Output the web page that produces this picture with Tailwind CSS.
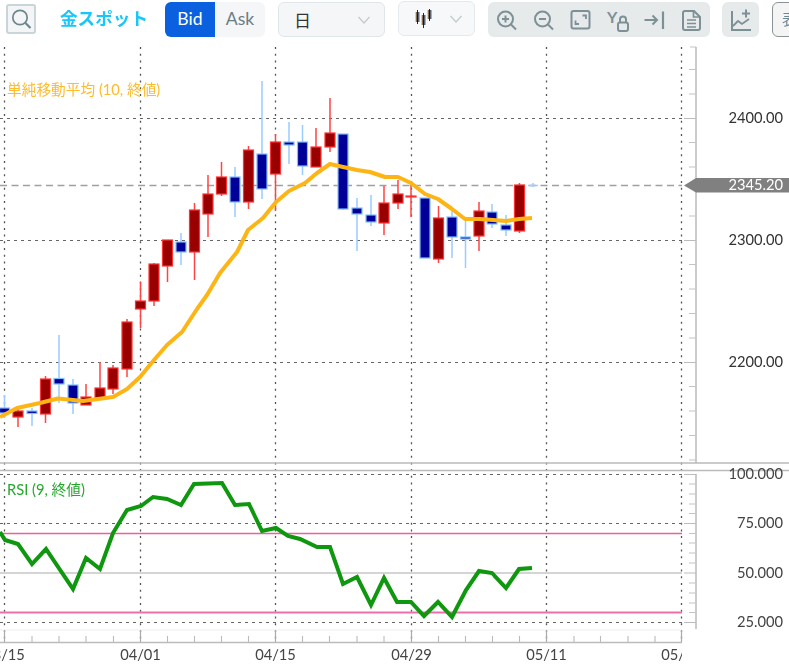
<!DOCTYPE html>
<html lang="ja">
<head>
<meta charset="utf-8">
<script src="https://cdn.jsdelivr.net/npm/@tailwindcss/browser@4"></script>
<title>金スポット</title>
</head>
<body class="bg-white overflow-hidden font-['Lato','Noto_Sans_CJK_JP',sans-serif]">
<div class="w-[789px] h-[664px] overflow-hidden flex flex-col blur-[0.35px]">
  <header class="h-[40px] shrink-0 flex items-start pt-[2px] overflow-hidden">
    <button class="ml-[6px] mt-[2px] w-[30px] h-[30px] rounded-[3px] border-2 border-[#c9d5d8] bg-[#f3f5f6] flex items-center justify-center shrink-0">
      <svg class="w-[24px] h-[24px]" viewBox="0 0 24 24" fill="none" stroke="#6f858d" stroke-width="1.7"><circle cx="11" cy="10.5" r="7.2"/><path d="M16.5 16l5 5" stroke-width="2.2"/></svg>
    </button>
    <div class="ml-[24px] w-[105px] shrink-0 h-[33px] flex items-center text-[17.6px] font-bold text-[#17c6fb] font-['Noto_Sans_CJK_JP',sans-serif]">金スポット</div>
    <div class="flex h-[35px] w-[100px] shrink-0 rounded-[6px] overflow-hidden text-[17.6px]">
      <div class="w-[50px] bg-[#0a60df] text-white flex items-center justify-center">Bid</div>
      <div class="w-[50px] bg-[#f5f6f7] text-[#6d7d86] flex items-center justify-center">Ask</div>
    </div>
    <div class="ml-[13px] w-[107px] h-[35px] shrink-0 rounded-[6px] border border-[#dfe6ea] bg-[#f5f6f7] flex items-center justify-between pl-[15px] pr-[13px] text-[17px] text-[#333] font-['Noto_Sans_CJK_JP',sans-serif]">
      <span>日</span>
      <svg class="w-[14px] h-[10px]" viewBox="0 0 14 10" fill="none" stroke="#c4ccd0" stroke-width="1.4"><path d="M1.5 2l5.500 6 5.500-6"/></svg>
    </div>
    <div class="ml-[13px] -mt-[1px] w-[77px] h-[35px] shrink-0 rounded-[6px] border border-[#e3e9ec] bg-[#f7f8f9] flex items-center pl-[15px]">
      <svg class="w-[20px] h-[20px]" viewBox="0 0 20 20" fill="none">
        <path d="M3.500 1v14M9.500 4v15M15.500 -1v13" stroke="#2a2226" stroke-width="1"/>
        <path d="M1.500 3h1v10h-1zM7.500 6h1v10h-1zM13.500 1h1v9h-1z" fill="#f39a1f"/>
        <path d="M4.500 3h1v10h-1zM10.500 6h1v10h-1zM16.500 1h1v9h-1z" fill="#2f6fc0"/>
        <path d="M2.500 3h2v10h-2zM8.500 6h2v10h-2zM14.500 1h2v9h-2z" fill="#1a1518"/>
      </svg>
      <svg class="ml-[15px] w-[14px] h-[10px]" viewBox="0 0 14 10" fill="none" stroke="#c4ccd0" stroke-width="1.4"><path d="M1.500 2l5.500 6 5.500-6"/></svg>
    </div>
    <div class="ml-[13px] w-[222px] h-[35px] shrink-0 rounded-[6px] bg-[#e6eaeb] flex items-center">
      <div class="w-[37px] flex justify-center"><svg class="w-[24px] h-[24px]" viewBox="0 0 24 24" fill="none" stroke="#7d9096" stroke-width="2"><circle cx="10.500" cy="11" r="7.500"/><path d="M16 16.500l5 5M10.500 7.500v7M7 11h7"/></svg></div>
      <div class="w-[37px] flex justify-center"><svg class="w-[24px] h-[24px]" viewBox="0 0 24 24" fill="none" stroke="#7d9096" stroke-width="2"><circle cx="10.500" cy="11" r="7.500"/><path d="M16 16.500l5 5M7 11h7"/></svg></div>
      <div class="w-[37px] flex justify-center"><svg class="w-[24px] h-[24px]" viewBox="0 0 24 24" fill="none" stroke="#7d9096" stroke-width="2"><rect x="2.500" y="3" width="18" height="17.500" rx="2"/><path d="M13.500 7.500h3.500v3.500M6.500 12.500v3.500h3.500" stroke-width="1.800"/></svg></div>
      <div class="w-[37px] flex justify-center"><svg class="w-[24px] h-[24px]" viewBox="0 0 24 24" fill="none" stroke="#7d9096" stroke-width="2"><text x="1" y="15" font-size="16" font-weight="700" fill="#7d9096" stroke="none" font-family="Lato">Y</text><rect x="12" y="14.500" width="10" height="8.500" rx="2"/><path d="M14 14.500v-3a3 3 0 016 0v3"/></svg></div>
      <div class="w-[37px] flex justify-center"><svg class="w-[24px] h-[24px]" viewBox="0 0 24 24" fill="none" stroke="#7d9096" stroke-width="2"><path d="M1.500 12h12.500M9.500 7.500L14 12l-4.500 4.500"/><path d="M20 3.500v17.500" stroke-width="2.200"/></svg></div>
      <div class="w-[37px] flex justify-center"><svg class="w-[24px] h-[24px]" viewBox="0 0 24 24" fill="none" stroke="#7d9096" stroke-width="2"><path d="M5 3h9l6 6v11a2 2 0 01-2 2H5a2 2 0 01-2-2V5a2 2 0 012-2z"/><path d="M13.500 3.500V9h6M7 12h9M7 15.500h9M7 19h9" stroke-width="1.700"/></svg></div>
    </div>
    <div class="ml-[12px] w-[37px] h-[35px] shrink-0 rounded-[6px] bg-[#e6eaeb] flex items-center justify-center">
      <svg class="w-[24px] h-[24px]" viewBox="0 0 24 24" fill="none" stroke="#7d9096" stroke-width="2"><path d="M3 3v19h19"/><path d="M4 18l5-5 4 3 7-5" stroke-width="1.800"/><path d="M17 1.500v8M13 5.500h8"/></svg>
    </div>
    <div class="ml-[13px] w-[40px] h-[35px] shrink-0 rounded-[6px] border border-[#8c9396] bg-[#f4f4f4] flex items-center pl-[9px] text-[15px] text-[#6d8795] font-['Noto_Sans_CJK_JP',sans-serif] overflow-hidden"><span class="shrink-0">表示</span></div>
  </header>

  <svg class="block w-[789px] h-[624px] shrink-0" viewBox="0 40 789 624" fill="none">
    <!-- vertical dotted grid -->
    <path d="M4.500 47V642M140.500 47V642M275.500 47V642M411.500 47V642M546.500 47V642M681.500 47V642" stroke="#555" stroke-width="1.300" stroke-dasharray="2 4.700"/>
    <!-- horizontal grid, price panel -->
    <path d="M0 118.500H682M0 240.500H682M0 362.500H682" stroke="#666" stroke-width="1.200" stroke-dasharray="3 4"/>
    <path d="M0 185.500H682" stroke="#a0a0a0" stroke-width="1.500" stroke-dasharray="7 4.500"/>
    <!-- separators -->
    <path d="M0 463H789M0 470.500H789" stroke="#bbb" stroke-width="1.500"/>
    <!-- horizontal grid, RSI panel -->
    <path d="M0 474.500H682M0 523.500H682M0 622.500H682" stroke="#666" stroke-width="1.200" stroke-dasharray="3 4"/>
    <path d="M0 573H682" stroke="#aaa" stroke-width="1"/>
    <path d="M0 533.500H682" stroke="#ec5fa0" stroke-width="1.500"/>
    <path d="M0 612.500H682" stroke="#ee6eaa" stroke-width="2"/>
    <path d="M0 630H682" stroke="#eee"/>

    <!-- right axis -->
    <path d="M696 47V463M696 474V629" stroke="#bbb" stroke-width="1.500"/>
    <path d="M684 118.500H696M684 240.500H696M684 362.500H696M684 474.500H696M684 523.500H696M684 573H696M684 622.500H696" stroke="#bbb" stroke-width="1.200"/>
    <path d="M690 47H696M689 69.500H696M689 94H696M689 142.500H696M689 167H696M689 216H696M689 264.500H696M689 289H696M689 313.500H696M689 338H696M689 386.500H696M689 411H696M689 435.500H696M689 460H696M689 484H696M689 494H696M689 504H696M689 513.500H696M689 533.500H696M689 543H696M689 553H696M689 563H696M689 583H696M689 593H696M689 603H696M689 612.500H696" stroke="#c4c4c4" stroke-width="1.100"/>
    <!-- bottom axis -->
    <path d="M0 642.500H682" stroke="#bbb" stroke-width="1.500"/>
    <path d="M4.500 631V642M140.500 631V642M275.500 631V642M411.500 631V642M546.500 631V642M681.500 631V642" stroke="#aaa" stroke-width="1.200"/>
    <path d="M32 636V642M59 636V642M86 636V642M113.500 636V642M167.500 636V642M194.500 636V642M221.500 636V642M248.500 636V642M302.500 636V642M329.500 636V642M357 636V642M384 636V642M438.500 636V642M465.500 636V642M492.500 636V642M519.500 636V642M574 636V642M600.500 636V642M628 636V642M655 636V642" stroke="#bbb" stroke-width="1.100"/>

    <!-- candles -->
    <g stroke-width="1.500" stroke="#99ccff">
      <path d="M4.500 395V418M32 408V426M59 335V403M73 379V414M181 233V265M235 167V217M262 81V199M289 122V164M302.500 125V175M343 134V210M357 198V251M371 195V226M425 198V258M452 211V258M465.500 217V268M492 204V228M506 215V236M533 183V187"/>
    </g>
    <g stroke-width="1.500" stroke="#ff4444">
      <path d="M18 406V427M45.500 376V423M86 384V405M100 362V400M113 365V394M127 319V377M140.500 282V328M154 263V306M167.500 240V282M194.500 203V280M208 175V237M221.500 162V196M248.500 146V209M275.500 134V211M316 128V167M330 98V152M384 186V235M398 180V209M411 185V217M438.500 206V263M479 202V251M519.500 183V233"/>
    </g>
    <g fill="#000099" stroke="#80bfff" stroke-width="1.200">
      <rect x="-0.500" y="408" width="10" height="5"/>
      <rect x="27" y="411" width="10" height="2.500"/>
      <rect x="54" y="378.500" width="10" height="5.500"/>
      <rect x="68" y="385" width="10" height="18"/>
      <rect x="176" y="242" width="10" height="10"/>
      <rect x="230" y="177" width="10" height="25"/>
      <rect x="257" y="154" width="10" height="35"/>
      <rect x="284" y="142" width="10" height="3"/>
      <rect x="297.500" y="142" width="10" height="24"/>
      <rect x="338" y="134" width="10" height="75"/>
      <rect x="352" y="208" width="10" height="6"/>
      <rect x="366" y="215" width="10" height="7"/>
      <rect x="420" y="198" width="10" height="60"/>
      <rect x="447" y="217" width="10" height="20"/>
      <rect x="460.500" y="237" width="10" height="2"/>
      <rect x="487" y="212" width="10" height="12"/>
      <rect x="501" y="225" width="10" height="5"/>
    </g>
    <path d="M528 185.500H538" stroke="#99ccff" stroke-width="1.500"/>
    <g fill="#990000" stroke="#ff3333" stroke-width="1.200">
      <rect x="13" y="411" width="10" height="6"/>
      <rect x="40.500" y="379" width="10" height="35"/>
      <rect x="81" y="397" width="10" height="8"/>
      <rect x="95" y="388" width="10" height="10"/>
      <rect x="108" y="368" width="10" height="21"/>
      <rect x="122" y="322" width="10" height="47"/>
      <rect x="135.500" y="301" width="10" height="8"/>
      <rect x="149" y="264" width="10" height="37"/>
      <rect x="162.500" y="240" width="10" height="26"/>
      <rect x="189.500" y="210" width="10" height="42"/>
      <rect x="203" y="194" width="10" height="20"/>
      <rect x="216.500" y="177" width="10" height="17"/>
      <rect x="243.500" y="150" width="10" height="52"/>
      <rect x="270.500" y="142" width="10" height="32"/>
      <rect x="311" y="147" width="10" height="20"/>
      <rect x="325" y="133" width="10" height="14"/>
      <rect x="379" y="203" width="10" height="20"/>
      <rect x="393" y="194" width="10" height="9"/>
      <rect x="406" y="196" width="10" height="1"/>
      <rect x="433.500" y="218" width="10" height="41"/>
      <rect x="474" y="211" width="10" height="25"/>
      <rect x="514.500" y="185" width="10" height="46"/>
    </g>

    <!-- moving average -->
    <polyline stroke="#fdb515" stroke-width="4" stroke-linejoin="round" points="0,417 17,408 40,403 58,398.500 83,401 113,397 127,389 140,377 154,360 167,345 182,332 197,309 207,295 220,273 237,252 248,230 263,218 276,202 289,191 305,183 317,173 330,164 343,167 357,170 370,172 385,177 398,177 411,183 425,194 438,199 452,209 465,219 479,219 493,220 506,221 519,219 532,218"/>
    <!-- RSI -->
    <polyline stroke="#0f970f" stroke-width="4" stroke-linejoin="miter" points="0,532 5,540 18,544 32,564 46,549 73,589 86,558 100,569 113,533 127,510 141,506 153,497 167,499 181,505 194,484 222,483 235,505 249,504 262,531 276,528 288,536 300,539 317,547 330,547 343,584 357,577 371,605 384,578 397,602 411,602 424,616 438,602 452,617 466,590 479,571 492,573 506,588 519,569 532,568"/>

    <!-- current price tag -->
    <path d="M684 185.500L696 178H789V192.500H696Z" fill="#808080"/>

    <!-- labels -->
    <g font-size="14.700" fill="#333" font-family="Lato">
      <text x="783" y="123" text-anchor="end">2400.00</text>
      <text x="783" y="245" text-anchor="end">2300.00</text>
      <text x="783" y="367" text-anchor="end">2200.00</text>
      <text x="783" y="190" text-anchor="end" fill="#ffffff">2345.20</text>
      <text x="783" y="479" text-anchor="end" fill="#444">100.000</text>
      <text x="783" y="528" text-anchor="end" fill="#444">75.000</text>
      <text x="783" y="578" text-anchor="end" fill="#444">50.000</text>
      <text x="783" y="627" text-anchor="end" fill="#444">25.000</text>
      <g fill="#444" text-anchor="middle">
        <text x="4.500" y="660">03/15</text>
        <text x="140.500" y="660">04/01</text>
        <text x="275.500" y="660">04/15</text>
        <text x="411.500" y="660">04/29</text>
        <text x="546.500" y="660">05/11</text>
      </g>
    </g>
    <svg x="640" y="640" width="42" height="24" viewBox="640 640 42 24"><text x="681.500" y="660" text-anchor="middle" font-size="14.700" fill="#444" font-family="Lato">05/01</text></svg>
    <text x="7" y="95" font-size="14.700" fill="#fdbb2d" font-family="Lato, 'Noto Sans CJK JP', sans-serif">単純移動平均 (10, 終値)</text>
    <text x="7" y="495" font-size="14.700" fill="#24a82c" font-family="Lato, 'Noto Sans CJK JP', sans-serif">RSI (9, 終値)</text>
  </svg>
</div>
</body>
</html>
